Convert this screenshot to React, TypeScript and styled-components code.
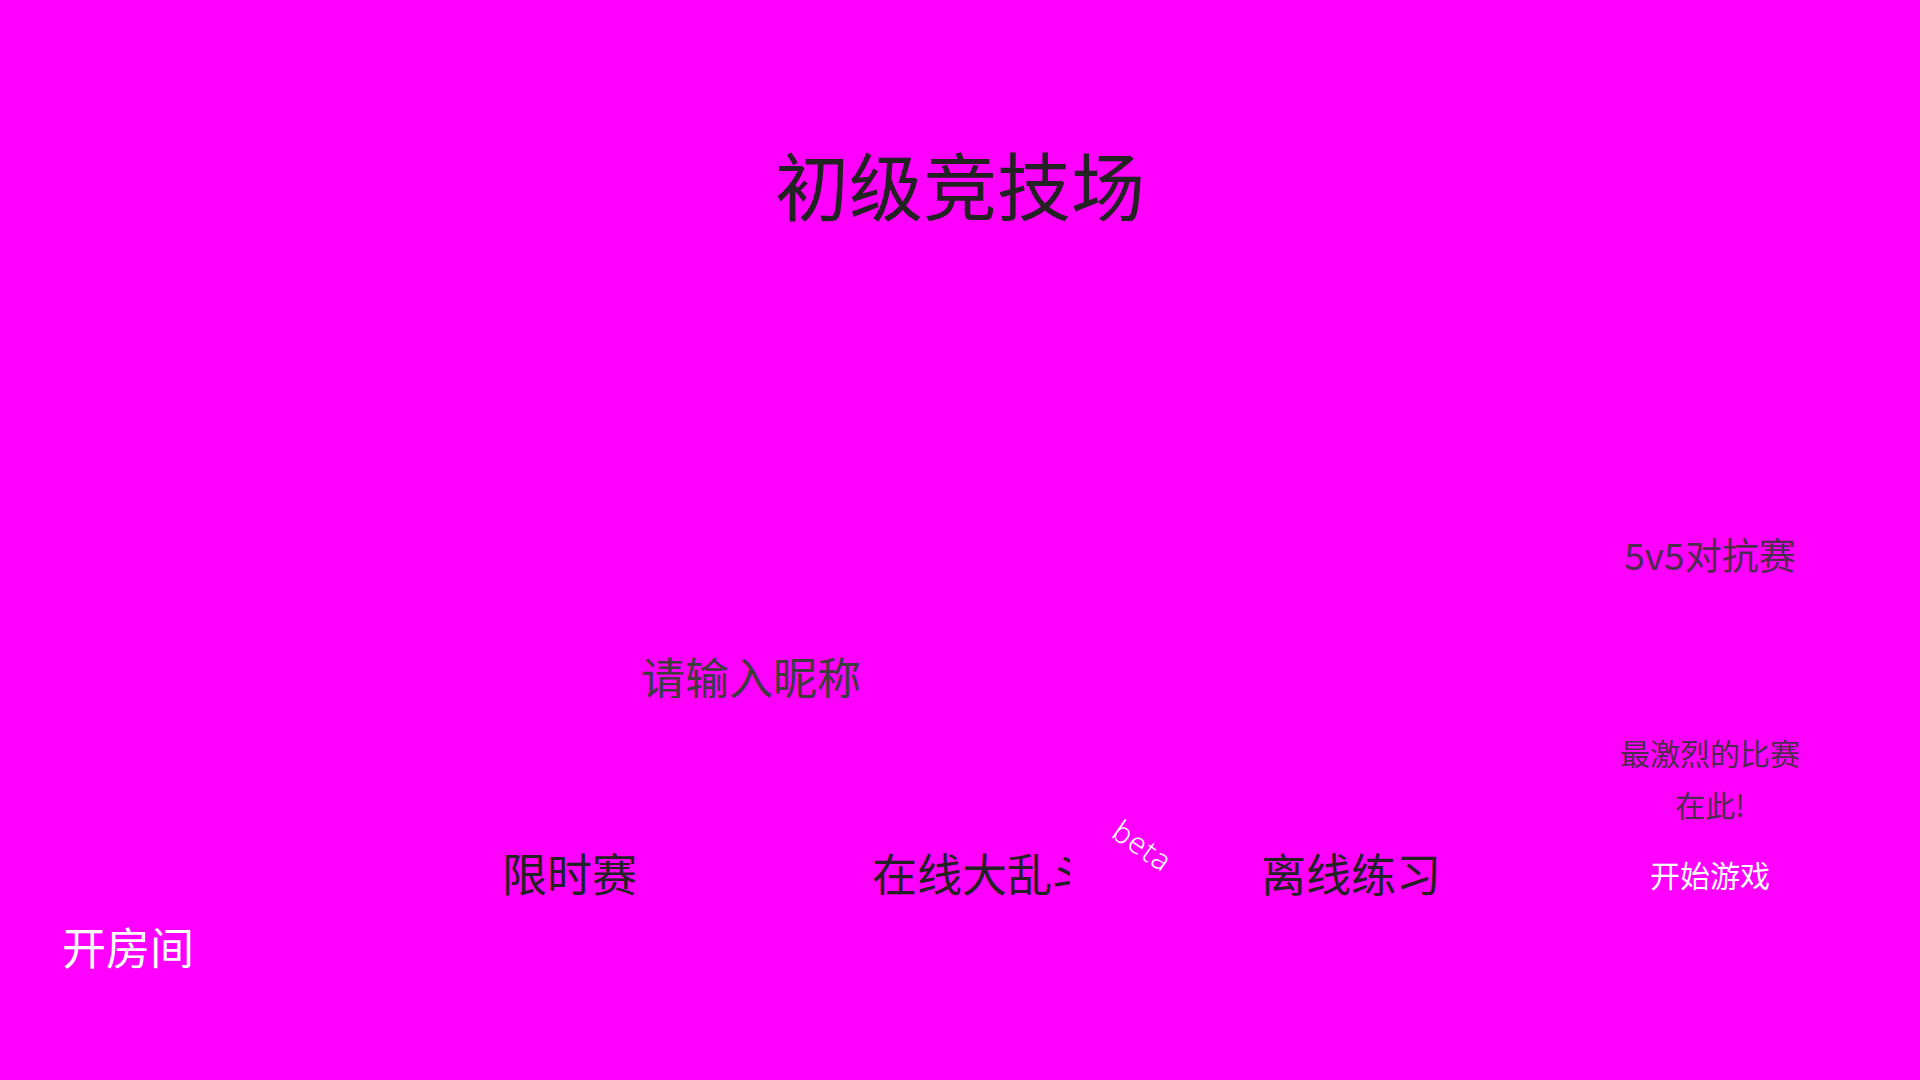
import React from "react";
import styled, {createGlobalStyle} from "styled-components";

const GlobalStyle = createGlobalStyle`
  html, body {
    margin: 0;
    padding: 0;
  }
  body {
    font-family: "Noto Sans CJK SC", "Noto Sans", sans-serif;
    background: #ff00ff;
  }
`;

const Page = styled.div`
  display: flex;
  flex-direction: column;
  width: 100%;
  height: 100vh;
  min-height: 1080px;
  background: #ff00ff;
  overflow: hidden;
`;

const Title = styled.h1`
  margin: 0;
  padding-top: 146px;
  font-size: 74px;
  font-weight: 400;
  line-height: 1;
  text-align: center;
  color: #222;
`;

const Stage = styled.div`
  flex: 1;
  display: grid;
  grid-template-columns: 1fr 300px;
  padding-right: 60px;
`;

const LeftPane = styled.div`
  display: flex;
  flex-direction: column;
  align-items: flex-start;
  padding-top: 434px;
`;

const NameInput = styled.input`
  margin-left: 551px;
  width: 400px;
  height: 44px;
  padding: 0;
  border: none;
  outline: none;
  background: transparent;
  font-family: inherit;
  font-size: 44px;
  line-height: 1;
  text-align: center;
  color: #222;

  &::placeholder {
    color: #3d3d3d;
    opacity: 1;
  }
`;

const ModeRow = styled.div`
  display: flex;
  align-items: flex-start;
  margin-top: 148px;
  padding-left: 502px;
`;

const ModeSlot = styled.div<{$offset: number}>`
  position: relative;
  margin-left: ${p => p.$offset}px;
`;

const ModeButton = styled.button<{$maxWidth?: number}>`
  display: block;
  max-width: ${p => (p.$maxWidth ? `${p.$maxWidth}px` : "none")};
  padding: 0;
  border: none;
  background: none;
  overflow: ${p => (p.$maxWidth ? "hidden" : "visible")};
  white-space: nowrap;
  font-family: inherit;
  font-size: 45px;
  line-height: 1.2;
  color: #222;
  cursor: pointer;
`;

const BetaTag = styled.span`
  position: absolute;
  left: 256px;
  top: -36px;
  font-family: "Noto Sans", "DejaVu Sans", sans-serif;
  font-size: 30px;
  font-weight: 300;
  letter-spacing: 1px;
  color: #fff;
  transform: rotate(35deg);
  transform-origin: left top;
  pointer-events: none;
`;

const RoomButton = styled.button`
  margin-top: 20px;
  margin-left: 62px;
  padding: 0;
  border: none;
  background: none;
  font-family: inherit;
  font-size: 44px;
  line-height: 1.2;
  color: #fff;
  cursor: pointer;
`;

const ModeCard = styled.div`
  display: flex;
  flex-direction: column;
  align-items: center;
  padding-top: 316px;
  text-align: center;
`;

const CardTitle = styled.div`
  font-size: 37px;
  line-height: 1;
  color: rgba(51, 51, 51, 0.88);
`;

const CardDesc = styled.p`
  margin: 153px 0 0;
  font-size: 30px;
  line-height: 52px;
  color: rgba(51, 51, 51, 0.88);
`;

const StartButton = styled.button`
  margin-top: 29px;
  padding: 0;
  border: none;
  background: none;
  font-family: inherit;
  font-size: 30px;
  line-height: 1;
  color: #fff;
  cursor: pointer;
`;

const modes = [
  {label: "限时赛", offset: 0},
  {label: "在线大乱斗", offset: 235, maxWidth: 198, beta: true},
  {label: "离线练习", offset: 191},
];

export default function App() {
  return (
    <>
      <GlobalStyle />
      <Page>
        <Title>初级竞技场</Title>
        <Stage>
          <LeftPane>
            <NameInput placeholder="请输入昵称" />
            <ModeRow>
              {modes.map(m => (
                <ModeSlot key={m.label} $offset={m.offset}>
                  <ModeButton $maxWidth={m.maxWidth}>{m.label}</ModeButton>
                  {m.beta && <BetaTag>beta</BetaTag>}
                </ModeSlot>
              ))}
            </ModeRow>
            <RoomButton>开房间</RoomButton>
          </LeftPane>
          <ModeCard>
            <CardTitle>5v5对抗赛</CardTitle>
            <CardDesc>
              最激烈的比赛
              <br />
              在此!
            </CardDesc>
            <StartButton>开始游戏</StartButton>
          </ModeCard>
        </Stage>
      </Page>
    </>
  );
}
